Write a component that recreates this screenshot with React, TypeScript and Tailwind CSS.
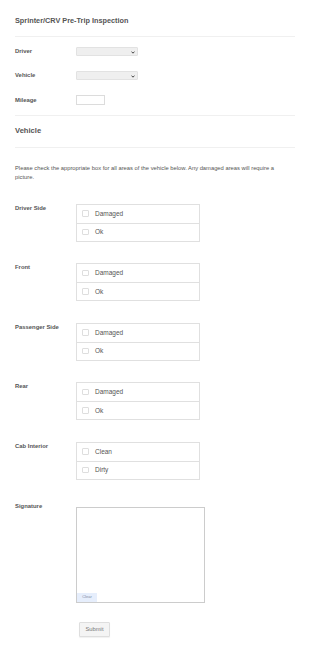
import React from "react";

const Chevron = () => (
  <svg width="4" height="3" viewBox="0 0 8 6" className="absolute right-[2.5px] top-[3px]">
    <path d="M1 1.2 L4 4.4 L7 1.2" fill="none" stroke="#333" strokeWidth="1.8" />
  </svg>
);

const FakeSelect = () => (
  <div className="relative w-[62px] h-[9px] bg-[#efefef] border border-[#e2e2e2] rounded-[1px]">
    <Chevron />
  </div>
);

const Row = ({ label, children }: { label: string; children: React.ReactNode }) => (
  <div className="flex items-center">
    <div className="w-[61px] text-[5.9px] font-bold text-[#555] leading-[7px]">{label}</div>
    {children}
  </div>
);

const CheckGroup = ({ label, options }: { label: string; options: string[] }) => (
  <div className="flex items-start mt-[21.5px]">
    <div className="w-[61px] pt-[1px] text-[5.9px] font-bold text-[#555] leading-[7px]">{label}</div>
    <div className="w-[124px] border border-[#e0e0e0]">
      {options.map((o, i) => (
        <div
          key={o}
          className={`flex items-center h-[18px] pl-[5px] ${i > 0 ? "border-t border-[#e0e0e0]" : ""}`}
        >
          <div className="w-[6.5px] h-[6.5px] border border-[#dedede] rounded-[1px] bg-white" />
          <span className="ml-[6.5px] text-[6.5px] text-[#555] leading-[8px]">{o}</span>
        </div>
      ))}
    </div>
  </div>
);

export default function App() {
  return (
    <div className="w-[310px] min-h-[653px] bg-white px-[15px] font-['Liberation_Sans',Arial,sans-serif]">
      <div className="pt-[16px] text-[7.3px] leading-[9px] font-bold text-[#555]">
        Sprinter/CRV Pre-Trip Inspection
      </div>
      <div className="mt-[11px] border-t border-[#f0f0f0]" />

      <div className="mt-[10px]">
        <Row label="Driver">
          <FakeSelect />
        </Row>
      </div>
      <div className="mt-[15px]">
        <Row label="Vehicle">
          <FakeSelect />
        </Row>
      </div>
      <div className="mt-[15px]">
        <Row label="Mileage">
          <div className="w-[29px] h-[10px] bg-white border border-[#dcdcdc]" />
        </Row>
      </div>
      <div className="mt-[10px] border-t border-[#f0f0f0]" />

      <div className="mt-[10px] text-[7.6px] leading-[10px] font-bold text-[#555]">Vehicle</div>
      <div className="mt-[11px] border-t border-[#f0f0f0]" />

      <p className="mt-[16px] text-[5.8px] leading-[9.3px] text-[#555] whitespace-nowrap">
        Please check the appropriate box for all areas of the vehicle below. Any damaged areas will require a
        <br />
        picture.
      </p>

      <div className="-mt-[0.5px]">
        <CheckGroup label="Driver Side" options={["Damaged", "Ok"]} />
      </div>
      <CheckGroup label="Front" options={["Damaged", "Ok"]} />
      <CheckGroup label="Passenger Side" options={["Damaged", "Ok"]} />
      <CheckGroup label="Rear" options={["Damaged", "Ok"]} />
      <CheckGroup label="Cab Interior" options={["Clean", "Dirty"]} />

      <div className="flex items-start mt-[23px]">
        <div className="w-[61px] text-[5.9px] font-bold text-[#555] leading-[7px]">Signature</div>
        <div className="relative mt-[4px] w-[129px] h-[96px] border border-[#cccccc]">
          <div className="absolute left-0 bottom-0 w-[20px] h-[9px] bg-[#e6eefc] flex items-center justify-center text-[4px] text-[#7d8aa3]">
            Clear
          </div>
        </div>
      </div>

      <div className="flex mt-[19px]">
        <div className="w-[64px]" />
        <div className="w-[31px] h-[15px] bg-[#f4f4f4] border border-[#dedede] rounded-[1px] shadow-[0_1px_1px_rgba(0,0,0,0.06)] flex items-center justify-center text-[5.8px] text-[#777]">
          Submit
        </div>
      </div>
    </div>
  );
}
